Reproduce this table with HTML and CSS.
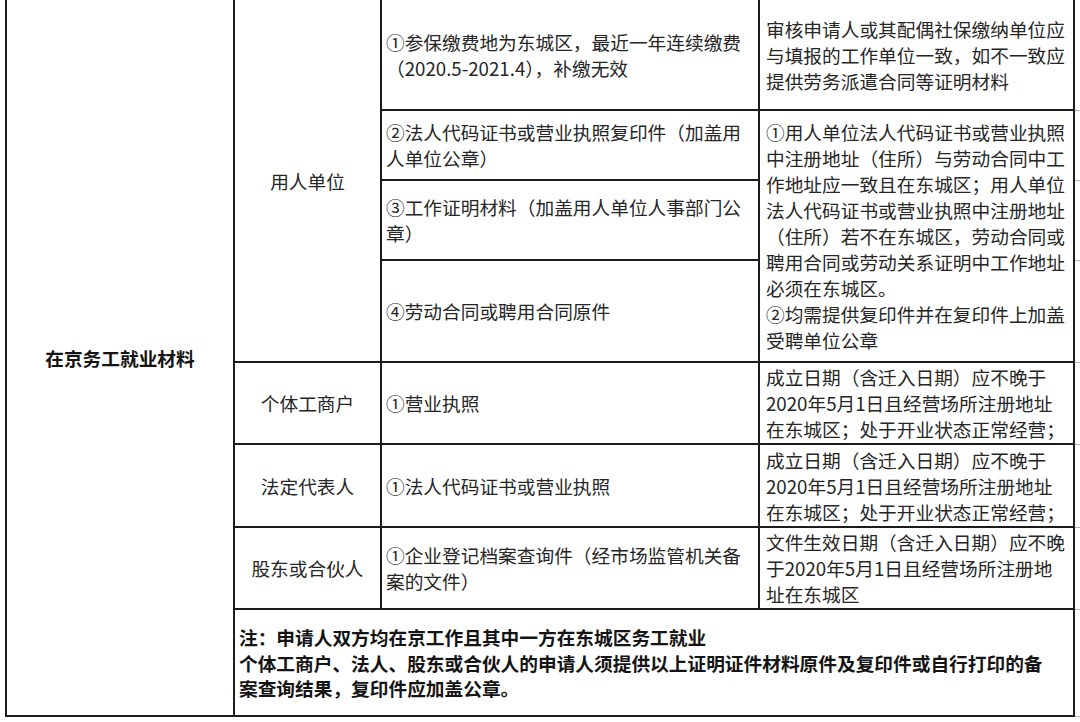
FILE: index.html
```html
<!DOCTYPE html>
<html lang="zh-CN">
<head>
<meta charset="utf-8">
<title>在京务工就业材料</title>
<link rel="stylesheet" href="styles.css">
</head>
<body>
<table class="grid">
  <colgroup>
    <col class="w1"><col class="w2"><col class="w3"><col class="w4"><col class="w5">
  </colgroup>
  <tr class="r1">
    <td class="cat" rowspan="8">在京务工就业材料</td>
    <td class="kind" rowspan="4">用人单位</td>
    <td class="item">①参保缴费地为东城区，最近一年连续缴费<br>（2020.5-2021.4），补缴无效</td>
    <td class="req">审核申请人或其配偶社保缴纳单位应<br>与填报的工作单位一致，如不一致应<br>提供劳务派遣合同等证明材料</td>
    <td class="edge"></td>
  </tr>
  <tr class="r2">
    <td class="item">②法人代码证书或营业执照复印件（加盖用<br>人单位公章）</td>
    <td class="req" rowspan="3">①用人单位法人代码证书或营业执照<br>中注册地址（住所）与劳动合同中工<br>作地址应一致且在东城区；用人单位<br>法人代码证书或营业执照中注册地址<br>（住所）若不在东城区，劳动合同或<br>聘用合同或劳动关系证明中工作地址<br>必须在东城区。<br>②均需提供复印件并在复印件上加盖<br>受聘单位公章</td>
    <td class="edge"></td>
  </tr>
  <tr class="r3">
    <td class="item">③工作证明材料（加盖用人单位人事部门公<br>章）</td>
    <td class="edge"></td>
  </tr>
  <tr class="r4">
    <td class="item">④劳动合同或聘用合同原件</td>
    <td class="edge"></td>
  </tr>
  <tr class="r5">
    <td class="kind">个体工商户</td>
    <td class="item">①营业执照</td>
    <td class="req">成立日期（含迁入日期）应不晚于<br>2020年5月1日且经营场所注册地址<br>在东城区；处于开业状态正常经营；</td>
    <td class="edge"></td>
  </tr>
  <tr class="r6">
    <td class="kind">法定代表人</td>
    <td class="item">①法人代码证书或营业执照</td>
    <td class="req">成立日期（含迁入日期）应不晚于<br>2020年5月1日且经营场所注册地址<br>在东城区；处于开业状态正常经营；</td>
    <td class="edge"></td>
  </tr>
  <tr class="r7">
    <td class="kind">股东或合伙人</td>
    <td class="item">①企业登记档案查询件（经市场监管机关备<br>案的文件）</td>
    <td class="req">文件生效日期（含迁入日期）应不晚<br>于2020年5月1日且经营场所注册地<br>址在东城区</td>
    <td class="edge"></td>
  </tr>
  <tr class="r8">
    <td class="note" colspan="3">注：申请人双方均在京工作且其中一方在东城区务工就业<br>个体工商户、法人、股东或合伙人的申请人须提供以上证明证件材料原件及复印件或自行打印的备<br>案查询结果，复印件应加盖公章。</td>
    <td class="edge"></td>
  </tr>
</table>
</body>
</html>
```

FILE: styles.css
```css
html, body {
  margin: 0;
  padding: 0;
  background: #ffffff;
  overflow: hidden;
}

body {
  width: 1080px;
  height: 722px;
  font-family: "Noto Sans CJK SC", "Noto Sans", sans-serif;
  font-size: 18.7px;
  line-height: 26px;
  color: #262626;
}

.grid {
  border-collapse: collapse;
  table-layout: fixed;
  margin-left: 5px;
  width: 1100px;
}

.w1 { width: 228px; }
.w2 { width: 147px; }
.w3 { width: 378px; }
.w4 { width: 315px; }
.w5 { width: 32px; }

.grid td {
  border: 2px solid #1c1c1c;
  padding: 0;
  vertical-align: middle;
  white-space: nowrap;
}

.r1 td { border-top: none; }

.r1 { height: 110px; }
.r2 { height: 70px; }
.r3 { height: 80px; }
.r4 { height: 102px; }
.r5 { height: 82px; }
.r6 { height: 83px; }
.r7 { height: 82px; }
.r8 { height: 107px; }

.cat {
  text-align: center;
  font-weight: bold;
  color: #141414;
}

.kind {
  text-align: center;
}

.item {
  padding: 0 4px !important;
  text-align: left;
}

.req {
  padding: 0 6px !important;
  text-align: left;
}

.note {
  padding: 0 4px !important;
  font-weight: bold;
  color: #141414;
  line-height: 25.5px;
}

.grid td.edge {
  border-top: 1px solid #b4b4b4;
  border-bottom: 1px solid #b4b4b4;
  border-right: none;
}

.r1 td.edge { border-top: none; }
```
